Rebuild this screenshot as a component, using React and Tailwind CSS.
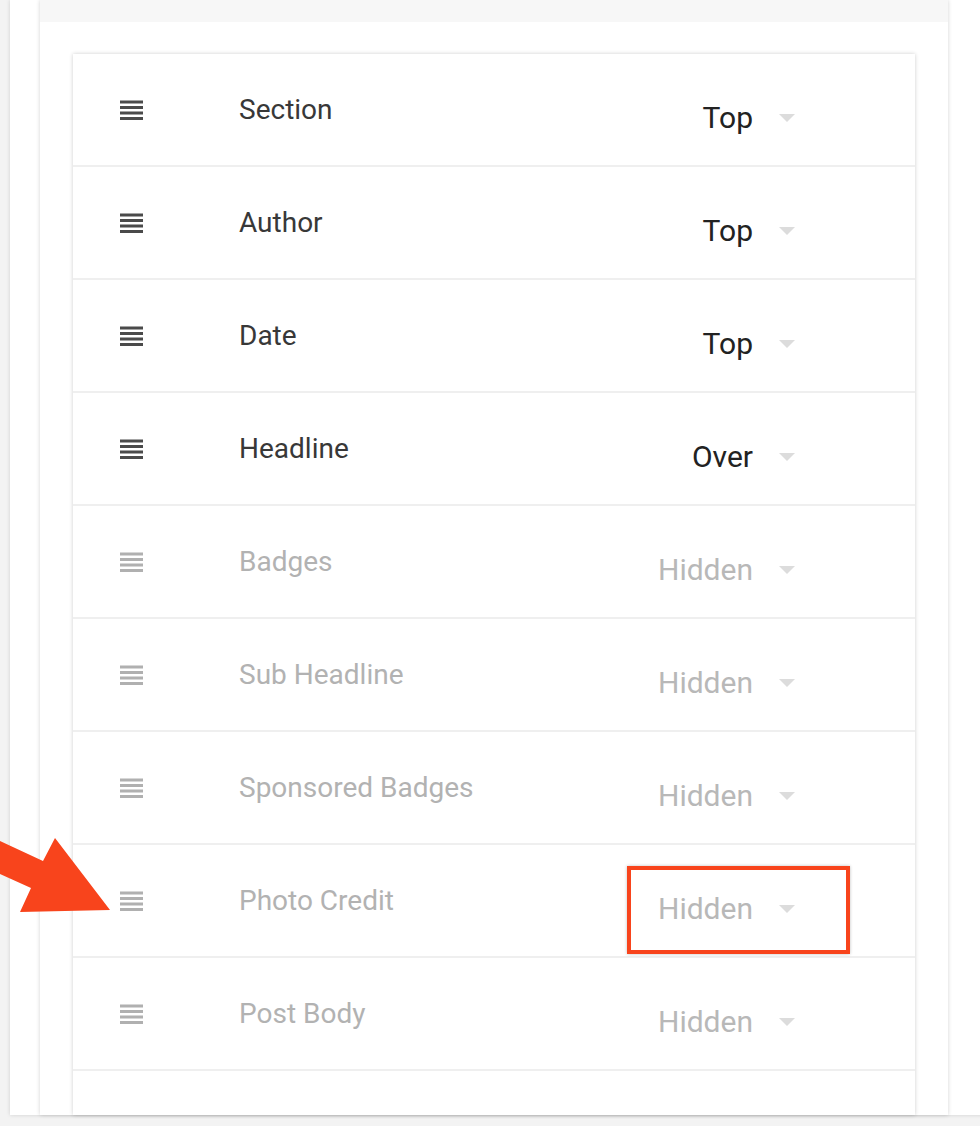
import React from "react";

const rows = [
  { label: "Section", value: "Top", on: true },
  { label: "Author", value: "Top", on: true },
  { label: "Date", value: "Top", on: true },
  { label: "Headline", value: "Over", on: true },
  { label: "Badges", value: "Hidden" },
  { label: "Sub Headline", value: "Hidden" },
  { label: "Sponsored Badges", value: "Hidden" },
  { label: "Photo Credit", value: "Hidden", marked: true },
  { label: "Post Body", value: "Hidden" },
];

function DragHandle({ on }) {
  return (
    <svg width="23" height="20" viewBox="0 0 23 20" className={on ? "text-[#4a4a4a]" : "text-[#b0b0b0]"}>
      <rect x="0" y="0.5" width="23" height="3" fill="currentColor" />
      <rect x="0" y="6" width="23" height="3" fill="currentColor" />
      <rect x="0" y="11.5" width="23" height="3" fill="currentColor" />
      <rect x="0" y="17" width="23" height="3" fill="currentColor" />
    </svg>
  );
}

function Row({ label, value, on, marked }) {
  return (
    <div className="relative flex items-center h-[113px] border-b-2 border-[#efefef] pl-[47px] pr-[120px]">
      <DragHandle on={on} />
      <span className={`ml-[96px] text-[28px] ${on ? "text-[#383838]" : "text-[#b2b2b2]"}`}>{label}</span>
      <div className="flex-1 flex items-center justify-end mt-[16px]">
        <span className={`text-[30px] ${on ? "text-[#222]" : "text-[#b8b8b8]"}`}>{value}</span>
        <span className="ml-[26px] w-0 h-0 border-x-[8px] border-x-transparent border-t-[8px] border-t-[#dcdcdc]" />
      </div>
      {marked && (
        <div className="absolute left-[554px] top-[21px] w-[223px] h-[88px] border-[4px] border-[#f8441c] shadow-[0_0_3px_rgba(0,0,0,0.25)]" />
      )}
    </div>
  );
}

export default function App() {
  return (
    <div className="relative h-[1126px] w-[980px] overflow-hidden bg-[#f3f3f3] font-['Roboto','Liberation_Sans',sans-serif]">
      <div className="flex h-[1115px] w-[990px] ml-[10px] bg-white shadow-[0_0_4px_rgba(0,0,0,0.15)]">
        <div className="ml-[30px] w-[908px] h-full flex flex-col bg-white shadow-[0_0_4px_rgba(0,0,0,0.18)]">
          <div className="h-[22px] bg-[#f7f7f7]" />
          <div className="mt-[32px] mx-[33px] flex-1 bg-white shadow-[0_0_4px_rgba(0,0,0,0.2)] overflow-hidden">
            {rows.map((r) => (
              <Row key={r.label} {...r} />
            ))}
          </div>
        </div>
      </div>

      {/* annotation arrow */}
      <svg className="absolute left-0 top-[830px]" width="120" height="90" viewBox="0 830 120 90">
        <polygon
          points="0,841 43,861 55,838 110,910 20,912 31,888 0,874"
          fill="#f8441c"
        />
      </svg>
    </div>
  );
}
